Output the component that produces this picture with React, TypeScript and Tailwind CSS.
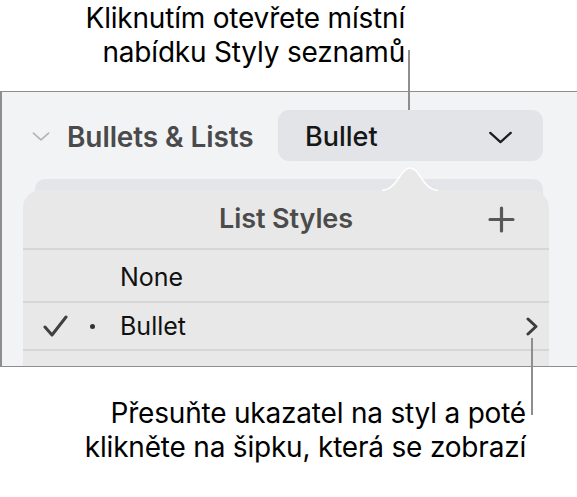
import React from 'react';

const font = { fontFamily: '"Inter", "Liberation Sans", sans-serif' };

function ChevronDown({ className }: { className?: string }) {
  return (
    <svg className={className} viewBox="0 0 26 14" fill="none" stroke="currentColor" strokeWidth={2.4} strokeLinecap="round" strokeLinejoin="round">
      <path d="M2 2l11 10L24 2" />
    </svg>
  );
}

export default function App() {
  return (
    <div className="relative w-[577px] h-[497px] bg-white overflow-hidden text-black" style={font}>
      {/* top callout */}
      <div className="pt-[1px] pr-[172px] text-right text-[28px] leading-[34px] tracking-[-0.2px]">
        <p>Kliknutím otevřete místní</p>
        <p>nabídku Styly seznamů</p>
      </div>

      {/* inspector panel */}
      <div className="relative mt-[22px] h-[276px] overflow-hidden border-y border-l-2 border-[#8e8e8e] bg-[#f2f3f5]">
        <div className="flex items-center pl-[30px] pr-[34px] pt-[18px]">
          <ChevronDown className="mt-[2px] w-[18px] h-[11px] text-[#b3b4b6]" />
          <span className="ml-[17px] pt-[2px] text-[28px] font-semibold text-[#4a4a4c] tracking-[-0.1px]">Bullets &amp; Lists</span>
          <button className="ml-auto flex h-[51px] w-[265px] items-center justify-between rounded-[11px] bg-[#e2e4e7] pl-[27px] pr-[30px] pt-[3px]">
            <span className="text-[27px] font-medium text-[#161616]">Bullet</span>
            <ChevronDown className="w-[25px] h-[13px] text-[#1c1c1c]" />
          </button>
        </div>

        <div className="mt-[18px] flex flex-col">
          <div className="ml-[33px] h-[20px] w-[508px] rounded-t-[10px] bg-[#e3e5e8]" />
          <div className="relative -mt-[9px] ml-[21px] w-[526px] rounded-t-[18px] bg-[#e8e8e8]">
            <div className="grid h-[58px] grid-cols-[70px_1fr_70px] items-center">
              <span />
              <span className="pt-[1px] text-center text-[27px] font-semibold text-[#4b4b4b] tracking-[-0.1px]">List Styles</span>
              <svg className="ml-[9px] h-[27px] w-[27px] text-[#575757]" viewBox="0 0 27 27" fill="none" stroke="currentColor" strokeWidth={3.2} strokeLinecap="round">
                <path d="M13.5 2v23M2 13.5h23" />
              </svg>
            </div>
            <div className="flex h-[53px] items-center border-t-2 border-[#d6d6d6] pl-[97px] pt-[4px]">
              <span className="text-[25px] text-[#111]">None</span>
            </div>
            <div className="flex h-[48px] items-center border-t-2 border-[#d6d6d6] pl-[20px] pr-[11px]">
              <svg className="h-[22px] w-[25px] text-[#404040]" viewBox="0 0 25 22" fill="none" stroke="currentColor" strokeWidth={3} strokeLinecap="round" strokeLinejoin="round">
                <path d="M2 12l7 8L23 2" />
              </svg>
              <span className="ml-[22px] h-[5px] w-[5px] rounded-full bg-[#333]" />
              <span className="ml-[25px] pt-[2px] text-[25px] text-[#111]">Bullet</span>
              <svg className="ml-auto h-[19px] w-[12px] text-[#3c3c3c]" viewBox="0 0 12 19" fill="none" stroke="currentColor" strokeWidth={3} strokeLinecap="round" strokeLinejoin="round">
                <path d="M2 2l8 7.5L2 17" />
              </svg>
            </div>
            <div className="h-[48px] border-t-2 border-[#d6d6d6]" />
          </div>
        </div>

        {/* popover caret */}
        <svg className="absolute left-[378px] top-[75px] h-[24px] w-[60px]" viewBox="0 0 60 24">
          <path d="M0 24C12 24 18 11 24 4Q30 -2 36 4C42 11 48 24 60 24Z" fill="#e8e8e8" />
          <path d="M2 23.5C13 23 18 11 24 4Q30 -2 36 4C42 11 47 23 58 23.5" fill="none" stroke="#ffffff" strokeWidth={1.5} />
        </svg>
      </div>

      {/* bottom callout */}
      <div className="mt-[29px] pr-[51px] text-right text-[28px] leading-[34px] tracking-[-0.2px]">
        <p>Přesuňte ukazatel na styl a poté</p>
        <p>klikněte na šipku, která se zobrazí</p>
      </div>

      {/* leader lines */}
      <div className="absolute left-[408px] top-[50px] h-[60px] w-[2px] bg-[#8e8e8e]" />
      <div className="absolute left-[531px] top-[338px] h-[77px] w-[2px] bg-[#8e8e8e]" />
    </div>
  );
}
